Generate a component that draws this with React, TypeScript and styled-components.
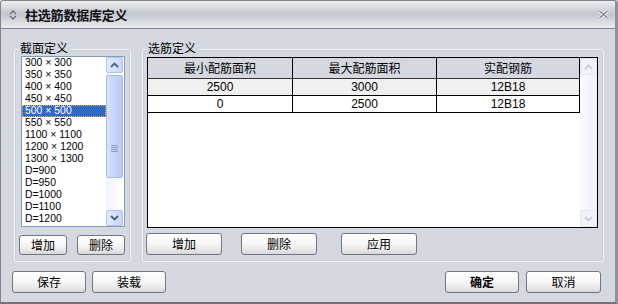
import React from 'react';
import styled, { createGlobalStyle } from 'styled-components';

const sections = [
  '300×300',
  '350×350',
  '400×400',
  '450×450',
  '500×500',
  '550×550',
  '1100×1100',
  '1200×1200',
  '1300×1300',
  'D=900',
  'D=950',
  'D=1000',
  'D=1100',
  'D=1200',
];

const rows = [
  { min: '2500', max: '3000', bar: '12B18' },
  { min: '0', max: '2500', bar: '12B18' },
];

const Global = createGlobalStyle`
  html, body {
    margin: 0;
    padding: 0;
    background: #d4d8e0;
  }
  body {
    font-family: "Liberation Sans", "Noto Sans CJK SC", sans-serif;
    font-size: 12px;
    color: #000;
  }
`;

const Chevron: React.FC<{ dir: 'up' | 'down'; color: string }> = ({ dir, color }) => (
  <svg width="9" height="6" viewBox="0 0 9 6">
    <polyline
      points={dir === 'up' ? '1,5 4.5,1.5 8,5' : '1,1 4.5,4.5 8,1'}
      fill="none"
      stroke={color}
      strokeWidth="1.8"
    />
  </svg>
);

// the "×" is drawn full width in the original list, so give it its own span
const SectionLabel: React.FC<{ text: string }> = ({ text }) => {
  const parts = text.split('×');
  if (parts.length < 2) return <>{text}</>;
  return (
    <>
      {parts[0]}
      <Times>×</Times>
      {parts[1]}
    </>
  );
};

const App: React.FC = () => {
  return (
    <>
      <Global />
      <Window>
        <TitleBar>
          <svg width="8" height="10" viewBox="0 0 8 10">
            <polyline points="1,4 4,1 7,4" fill="none" stroke="#6a6f78" strokeWidth="1.3" />
            <polyline points="1,6 4,9 7,6" fill="none" stroke="#6a6f78" strokeWidth="1.3" />
          </svg>
          <Title>柱选筋数据库定义</Title>
          <Close>
            <svg width="11" height="9" viewBox="0 0 11 9">
              <path d="M1.5,1 L9.5,8 M9.5,1 L1.5,8" stroke="#f4f5f7" strokeWidth="3" />
              <path d="M1.5,1 L9.5,8 M9.5,1 L1.5,8" stroke="#858a93" strokeWidth="1.6" />
            </svg>
          </Close>
        </TitleBar>
        <Body>
          <GroupsRow>
            <Group $width={117} $padTop={6} $padLeft={6}>
              <Legend>截面定义</Legend>
              <ListBox>
                <Items>
                  {sections.map((s) => (
                    <Item key={s} $selected={s === '500×500'}>
                      <SectionLabel text={s} />
                    </Item>
                  ))}
                </Items>
                <ScrollBar>
                  <ArrowBtn>
                    <Chevron dir="up" color="#4d6185" />
                  </ArrowBtn>
                  <Track>
                    <Thumb>
                      <Grip />
                    </Thumb>
                  </Track>
                  <ArrowBtn>
                    <Chevron dir="down" color="#4d6185" />
                  </ArrowBtn>
                </ScrollBar>
              </ListBox>
              <ButtonRow $offset={-2} $top={8}>
                <Button $w={48} $h={20}>增加</Button>
                <Button $w={48} $h={20} $ml={10}>删除</Button>
              </ButtonRow>
            </Group>
            <Group $width={462} $padTop={7} $padLeft={4}>
              <Legend>选筋定义</Legend>
              <Grid>
                <GridBody>
                  <Cells>
                    <HeadCell>最小配筋面积</HeadCell>
                    <HeadCell>最大配筋面积</HeadCell>
                    <HeadCell>实配钢筋</HeadCell>
                    {rows.map((r, i) => (
                      <React.Fragment key={i}>
                        <Cell $alt={i === 0}>{r.min}</Cell>
                        <Cell $alt={i === 0}>{r.max}</Cell>
                        <Cell $alt={i === 0}>{r.bar}</Cell>
                      </React.Fragment>
                    ))}
                  </Cells>
                </GridBody>
                <FadedScroll>
                  <FadedBtn>
                    <Chevron dir="up" color="#c9cedb" />
                  </FadedBtn>
                  <FadedBtn>
                    <Chevron dir="down" color="#c9cedb" />
                  </FadedBtn>
                </FadedScroll>
              </Grid>
              <ButtonRow $offset={-1} $top={5}>
                <Button $w={76} $h={22}>增加</Button>
                <Button $w={76} $h={22} $ml={19}>删除</Button>
                <Button $w={76} $h={22} $ml={24}>应用</Button>
              </ButtonRow>
            </Group>
          </GroupsRow>
          <Footer>
            <Button $w={74} $h={22}>保存</Button>
            <Button $w={74} $h={22} $ml={6}>装载</Button>
            <Spacer />
            <Button $w={74} $h={22} $bold>确定</Button>
            <Button $w={75} $h={22} $ml={7}>取消</Button>
          </Footer>
        </Body>
      </Window>
    </>
  );
};

export default App;

const Window = styled.div`
  width: 618px;
  height: 304px;
  box-sizing: border-box;
  display: flex;
  flex-direction: column;
  background: #d4d8e0;
  border: 1px solid #80858d;
  border-right: 3px solid #8d929a;
  border-bottom: 2px solid #6f747c;
  border-radius: 4px 4px 0 0;
  overflow: hidden;
`;

const TitleBar = styled.div`
  height: 27px;
  flex: none;
  display: flex;
  align-items: center;
  padding-left: 8px;
  border-bottom: 1px solid #80848c;
  background: linear-gradient(#eef0f2 0%, #d6d9de 25%, #c3c7ce 50%, #d7dadf 75%, #e9ebee 100%);
`;

const Title = styled.div`
  margin-left: 8px;
  font-family: "Noto Sans CJK SC", sans-serif;
  font-weight: bold;
  font-size: 13px;
  color: #111;
  letter-spacing: -0.2px;
`;

const Close = styled.div`
  margin-left: auto;
  margin-right: 6px;
  display: flex;
  align-items: center;
`;

const Body = styled.div`
  flex: 1;
  display: flex;
  flex-direction: column;
  padding-top: 20px;
`;

const GroupsRow = styled.div`
  display: flex;
  gap: 11px;
  padding: 0 11px 0 13px;
`;

const Group = styled.div<{ $width: number; $padTop: number; $padLeft: number }>`
  position: relative;
  box-sizing: border-box;
  width: ${(p) => p.$width}px;
  height: 213px;
  display: flex;
  flex-direction: column;
  padding: ${(p) => p.$padTop}px 0 5px ${(p) => p.$padLeft}px;
  border: 1px solid #f3f4f7;
  border-radius: 3px;
  box-shadow: inset 0 0 0 1px #c9cdd5;
`;

const Legend = styled.div`
  position: absolute;
  top: -9px;
  left: 3px;
  padding: 0 2px;
  line-height: 14px;
  background: #d4d8e0;
  font-family: "Noto Sans CJK SC", sans-serif;
  font-size: 12px;
`;

const ListBox = styled.div`
  box-sizing: border-box;
  width: 104px;
  height: 171px;
  display: flex;
  border: 1px solid #7f9db9;
  background: #fff;
`;

const Items = styled.div`
  flex: 1;
  display: flex;
  flex-direction: column;
`;

const Item = styled.div<{ $selected?: boolean }>`
  height: 12px;
  line-height: 12px;
  padding-left: 3px;
  font-family: "Liberation Sans", sans-serif;
  font-size: 10.4px;
  white-space: nowrap;
  box-sizing: border-box;
  overflow: hidden;
  color: ${(p) => (p.$selected ? '#fff' : '#000')};
  background: ${(p) => (p.$selected ? '#316ac5' : 'transparent')};
  outline: ${(p) => (p.$selected ? '1px dotted #e8b04a' : 'none')};
  outline-offset: -1px;
`;

const Times = styled.span`
  display: inline-block;
  width: 12px;
  text-align: center;
  font-size: 10.4px;
`;

const ScrollBar = styled.div`
  width: 17px;
  margin-right: 1px;
  display: flex;
  flex-direction: column;
  background: linear-gradient(to right, #f2f4fb, #fdfdfe);
`;

const ArrowBtn = styled.div`
  box-sizing: border-box;
  height: 16px;
  display: flex;
  align-items: center;
  justify-content: center;
  border: 1px solid #b3c4ea;
  border-radius: 2px;
  background: linear-gradient(to right, #e3ebfd, #c8d6f8);
`;

const Track = styled.div`
  flex: 1;
  padding-top: 2px;
`;

const Thumb = styled.div`
  box-sizing: border-box;
  height: 103px;
  display: flex;
  align-items: center;
  justify-content: center;
  padding-top: 44px;
  border: 1px solid #a7bbe6;
  border-radius: 2px;
  background: linear-gradient(to right, #d6e1fc, #c3d3f8 60%, #b9caf3);
`;

const Grip = styled.div`
  width: 7px;
  height: 7px;
  background: repeating-linear-gradient(#8a9cc6 0, #8a9cc6 1px, transparent 1px, transparent 2px);
`;

const ButtonRow = styled.div<{ $offset: number; $top: number }>`
  display: flex;
  margin-left: ${(p) => p.$offset}px;
  margin-top: ${(p) => p.$top}px;
`;

const Button = styled.button<{ $w: number; $h: number; $ml?: number; $bold?: boolean }>`
  box-sizing: border-box;
  width: ${(p) => p.$w}px;
  height: ${(p) => p.$h}px;
  margin: 0 0 0 ${(p) => p.$ml ?? 0}px;
  padding: 0;
  border: 1px solid #72767e;
  border-radius: 3px;
  background: linear-gradient(#ffffff 0%, #f6f6f6 50%, #e4e4e4 85%, #d6d6d6 100%);
  font-family: "Noto Sans CJK SC", sans-serif;
  font-size: 12px;
  font-weight: ${(p) => (p.$bold ? 'bold' : 'normal')};
  color: #000;
  line-height: 1;
`;

const Grid = styled.div`
  box-sizing: border-box;
  width: 451px;
  height: 171px;
  display: flex;
  border: 1px solid #000;
  background: #fff;
`;

const GridBody = styled.div`
  flex: 1;
`;

const Cells = styled.div`
  display: grid;
  grid-template-columns: 145px 144px 143px;
`;

const HeadCell = styled.div`
  box-sizing: border-box;
  height: 21px;
  line-height: 20px;
  text-align: center;
  border-right: 1px solid #000;
  border-bottom: 1px solid #333;
  background: #d4d8e0;
  font-family: "Noto Sans CJK SC", sans-serif;
`;

const Cell = styled.div<{ $alt?: boolean }>`
  box-sizing: border-box;
  height: 17px;
  line-height: 16px;
  text-align: center;
  border-right: 1px solid #000;
  border-bottom: 1px solid #000;
  background: ${(p) => (p.$alt ? '#f0f0f0' : '#fff')};
`;

const FadedScroll = styled.div`
  width: 17px;
  display: flex;
  flex-direction: column;
  justify-content: space-between;
  background: linear-gradient(to right, #fbfcff, #eef1fc);
`;

const FadedBtn = styled.div`
  box-sizing: border-box;
  height: 17px;
  display: flex;
  align-items: center;
  justify-content: center;
  border: 1px solid #e3e7f0;
  border-radius: 2px;
  background: #f0f2f8;
`;

const Footer = styled.div`
  display: flex;
  margin-top: 9px;
  padding: 0 14px 0 11px;
`;

const Spacer = styled.div`
  flex: 1;
`;
